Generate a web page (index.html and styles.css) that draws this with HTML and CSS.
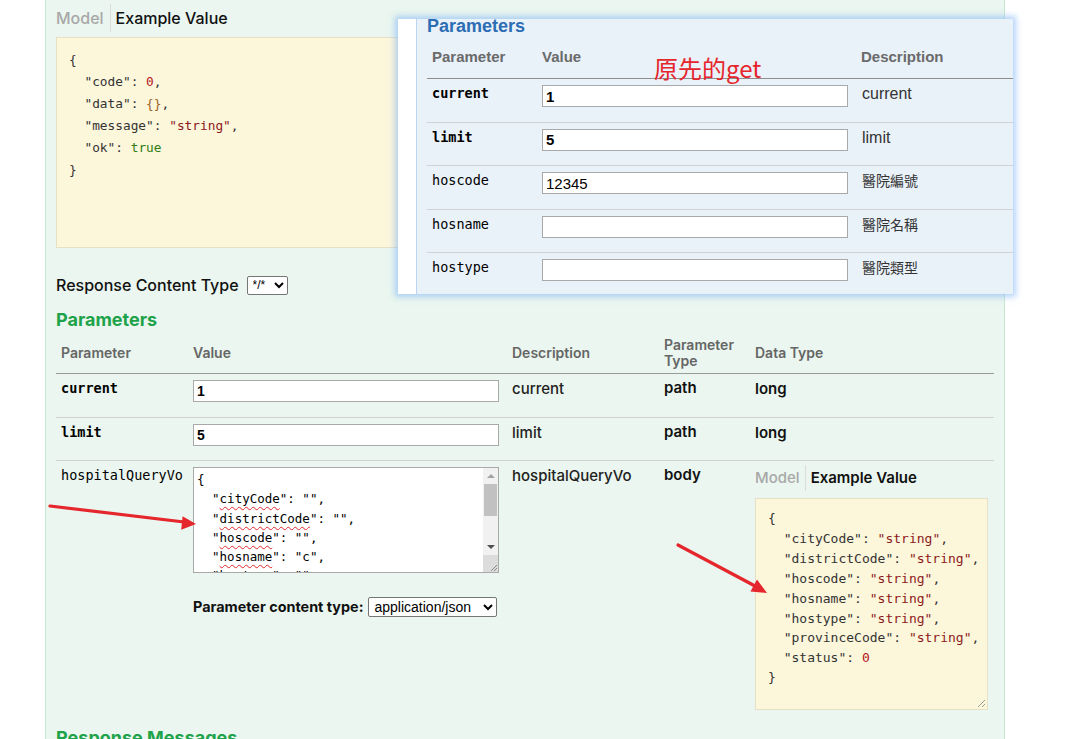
FILE: index.html
```html
<!DOCTYPE html>
<html lang="zh-Hant">
<head>
<meta charset="utf-8">
<title>Swagger UI</title>
<link rel="stylesheet" href="styles.css">
</head>
<body>
<div class="operation">
  <div class="tabs">
    <span class="tab tab-off">Model</span><span class="tab-sep"></span><span class="tab tab-on">Example Value</span>
  </div>
  <pre class="snippet snippet-top">{
  <span class="k">"code"</span>: <span class="n">0</span>,
  <span class="k">"data"</span>: <span class="o">{}</span>,
  <span class="k">"message"</span>: <span class="s">"string"</span>,
  <span class="k">"ok"</span>: <span class="b">true</span>
}</pre>

  <div class="rct">
    <span class="rct-label">Response Content Type</span>
    <select class="sel sel-rct"><option>*/*</option></select>
  </div>

  <h4 class="sec-title">Parameters</h4>

  <div class="ptable">
    <div class="prow phead">
      <div class="cell">Parameter</div>
      <div class="cell">Value</div>
      <div class="cell">Description</div>
      <div class="cell">Parameter<br>Type</div>
      <div class="cell">Data Type</div>
    </div>

    <div class="prow pbody">
      <div class="cell mono req">current</div>
      <div class="cell cell-input"><input class="inp req-inp" type="text" value="1"></div>
      <div class="cell desc">current</div>
      <div class="cell ptype">path</div>
      <div class="cell dtype">long</div>
    </div>

    <div class="prow pbody">
      <div class="cell mono req">limit</div>
      <div class="cell cell-input"><input class="inp req-inp" type="text" value="5"></div>
      <div class="cell desc">limit</div>
      <div class="cell ptype">path</div>
      <div class="cell dtype">long</div>
    </div>

    <div class="prow pbody plast">
      <div class="cell mono">hospitalQueryVo</div>
      <div class="cell cell-input">
        <div class="json-input">
          <div class="json-text">{
  "<span class="typo">cityCode</span>": "",
  "<span class="typo">districtCode</span>": "",
  "<span class="typo">hoscode</span>": "",
  "<span class="typo">hosname</span>": "c",
  "hostype": "",
  "provinceCode": "",
  "status": 0
}</div>
          <div class="json-scroll">
            <div class="sb-up"><span class="tri-up"></span></div>
            <div class="sb-thumb"></div>
            <div class="sb-track"></div>
            <div class="sb-down"><span class="tri-down"></span></div>
            <div class="sb-corner">
              <svg class="grip" width="10" height="10" viewBox="0 0 10 10"><path d="M9 3 L3 9 M9 6 L6 9" stroke="#8a8a8a" stroke-width="1"/></svg>
            </div>
          </div>
        </div>
        <div class="pct">
          <span class="pct-label">Parameter content type:</span>
          <select class="sel sel-pct"><option>application/json</option></select>
        </div>
      </div>
      <div class="cell desc">hospitalQueryVo</div>
      <div class="cell ptype">body</div>
      <div class="cell dtype-model">
        <div class="tabs tabs-small">
          <span class="tab tab-off">Model</span><span class="tab-sep"></span><span class="tab tab-on">Example Value</span>
        </div>
        <pre class="snippet snippet-body">{
  <span class="k">"cityCode"</span>: <span class="s">"string"</span>,
  <span class="k">"districtCode"</span>: <span class="s">"string"</span>,
  <span class="k">"hoscode"</span>: <span class="s">"string"</span>,
  <span class="k">"hosname"</span>: <span class="s">"string"</span>,
  <span class="k">"hostype"</span>: <span class="s">"string"</span>,
  <span class="k">"provinceCode"</span>: <span class="s">"string"</span>,
  <span class="k">"status"</span>: <span class="n">0</span>
}<svg class="grip grip-pre" width="10" height="10" viewBox="0 0 10 10"><path d="M9 2 L2 9 M9 6 L6 9" stroke="#9a9a9a" stroke-width="1"/></svg></pre>
      </div>
    </div>
  </div>

  <h4 class="sec-title sec-resp">Response Messages</h4>
</div>

<div class="overlay">
  <div class="ov-strip"></div>
  <div class="ov-body">
    <h4 class="ov-title">Parameters</h4>
    <div class="ov-row ov-head">
      <div class="ov-cell">Parameter</div>
      <div class="ov-cell">Value</div>
      <div class="ov-cell">Description</div>
    </div>
    <div class="ov-row">
      <div class="ov-cell mono ov-mono req">current</div>
      <div class="ov-cell ov-incell"><input class="ov-inp req-inp" type="text" value="1"></div>
      <div class="ov-cell ov-desc">current</div>
    </div>
    <div class="ov-row">
      <div class="ov-cell mono ov-mono req">limit</div>
      <div class="ov-cell ov-incell"><input class="ov-inp req-inp" type="text" value="5"></div>
      <div class="ov-cell ov-desc">limit</div>
    </div>
    <div class="ov-row">
      <div class="ov-cell mono ov-mono">hoscode</div>
      <div class="ov-cell ov-incell"><input class="ov-inp" type="text" value="12345"></div>
      <div class="ov-cell ov-desc cjk">醫院編號</div>
    </div>
    <div class="ov-row">
      <div class="ov-cell mono ov-mono">hosname</div>
      <div class="ov-cell ov-incell"><input class="ov-inp" type="text" value=""></div>
      <div class="ov-cell ov-desc cjk">醫院名稱</div>
    </div>
    <div class="ov-row ov-rowlast">
      <div class="ov-cell mono ov-mono">hostype</div>
      <div class="ov-cell ov-incell"><input class="ov-inp" type="text" value=""></div>
      <div class="ov-cell ov-desc cjk">醫院類型</div>
    </div>
  </div>
</div>

<div class="note">原先的get</div>

<svg class="arrows" width="1070" height="739" viewBox="0 0 1070 739">
  <line x1="50" y1="506" x2="184" y2="522" stroke="#e5262c" stroke-width="3.2" stroke-linecap="round"/>
  <polygon points="196,524 182.6,516.3 181.2,529.8" fill="#e5262c"/>
  <line x1="678" y1="545" x2="755" y2="586" stroke="#e5262c" stroke-width="3.2" stroke-linecap="round"/>
  <polygon points="767,593 757,579.5 750.5,591.5" fill="#e5262c"/>
</svg>
</body>
</html>
```

FILE: styles.css
```css
* { box-sizing: border-box; }

html, body { margin: 0; padding: 0; }

body {
  width: 1070px;
  height: 739px;
  overflow: hidden;
  position: relative;
  background: #ffffff;
  font-family: Inter, "Noto Sans", sans-serif;
  color: #111;
}

.operation {
  margin-left: 45px;
  width: 960px;
  min-height: 739px;
  background: #eaf6ef;
  border-left: 1px solid #c6e8d3;
  border-right: 1px solid #c6e8d3;
  padding: 4px 10px 0 10px;
}

/* Model / Example Value tabs */
.tabs {
  display: flex;
  align-items: center;
  height: 28px;
}
.tab {
  font-size: 16px;
  font-weight: 500;
  line-height: 20px;
}
.tab-off { color: #a8a8a8; }
.tab-on { color: #111; }
.tab-sep {
  width: 1px;
  align-self: stretch;
  background: #dcdcdc;
  margin: 0 5px 0 6px;
}

.snippet {
  margin: 0;
  background: #fcf6db;
  border: 1px solid #e5e0c6;
  font-family: "DejaVu Sans Mono", "Liberation Mono", monospace;
  color: #333;
  white-space: pre;
  overflow: hidden;
}
.snippet .k { color: #333; }
.snippet .s { color: #8c1a1a; }
.snippet .n { color: #b3151b; }
.snippet .b { color: #2f7d12; }
.snippet .o { color: #9c6226; }

.snippet-top {
  margin-top: 5px;
  width: 440px;
  height: 211px;
  padding: 11px 12px;
  font-size: 12.8px;
  line-height: 22px;
}

/* response content type */
.rct {
  margin-top: 27px;
  display: flex;
  align-items: center;
  height: 20px;
  gap: 8px;
}
.rct-label {
  font-size: 16px;
  font-weight: 500;
  line-height: 20px;
}
.sel {
  font-family: "Liberation Sans", Arial, sans-serif;
  color: #000;
  background: #fff;
  border: 1px solid #767676;
  border-radius: 2px;
  padding: 0 1px;
  margin: 0;
}
.sel-rct {
  width: 41px;
  height: 19px;
  font-size: 12px;
}

.sec-title {
  margin: 14px 0 2px 0;
  font-size: 18px;
  font-weight: 700;
  line-height: 22px;
  color: #1ea34a;
}
.sec-resp { margin-top: 17px; }

/* parameter table */
.prow {
  display: grid;
  grid-template-columns: 132px 319px 152px 91px 1fr;
  border-bottom: 1px solid #cfd4d1;
}
.phead {
  border-bottom: 1px solid #9a9a9a;
  padding: 4px 0;
  align-items: center;
  color: #666;
  font-size: 14px;
  font-weight: 600;
  line-height: 16px;
}
.cell { padding: 0 5px; }

.pbody {
  align-items: start;
  min-height: 43.5px;
}
.plast { border-bottom: none; }

.mono {
  font-family: "DejaVu Sans Mono", "Liberation Mono", monospace;
  font-size: 13.5px;
  line-height: 18px;
  color: #000;
  padding-top: 5px;
}
.req { font-weight: 700; }

.cell-input { padding-top: 6px; }

.inp {
  display: block;
  width: 306px;
  height: 22px;
  border: 1px solid #a9a9a9;
  background: #fff;
  padding: 0 3px;
  margin: 0;
  font-family: "Liberation Sans", Arial, sans-serif;
  font-size: 14px;
  color: #000;
}
.req-inp { font-weight: 700; }

.desc {
  padding-top: 6px;
  font-size: 15px;
  font-weight: 500;
  line-height: 18px;
  color: #222;
}
.ptype {
  padding-top: 5px;
  font-size: 15px;
  font-weight: 600;
  line-height: 18px;
  color: #111;
}
.dtype {
  padding-top: 6px;
  font-size: 15px;
  font-weight: 600;
  line-height: 18px;
  color: #111;
}

/* fake textarea */
.json-input {
  display: flex;
  width: 306px;
  height: 106px;
  border: 1px solid #a9a9a9;
  background: #fff;
}
.json-text {
  flex: 1;
  overflow: hidden;
  padding: 2px 3px;
  font-family: "DejaVu Sans Mono", "Liberation Mono", monospace;
  font-size: 12.5px;
  line-height: 19.3px;
  white-space: pre;
  color: #000;
}
.typo {
  text-decoration: underline wavy #e0282e;
  text-decoration-thickness: 1px;
  text-underline-offset: 3px;
}
.json-scroll {
  width: 15px;
  display: flex;
  flex-direction: column;
  background: #f1f1f1;
}
.sb-up, .sb-down {
  display: flex;
  align-items: center;
  justify-content: center;
}
.sb-up { height: 16px; }
.sb-down { height: 17px; }
.tri-up {
  width: 0; height: 0;
  border-left: 4px solid transparent;
  border-right: 4px solid transparent;
  border-bottom: 4px solid #a3a3a3;
}
.tri-down {
  width: 0; height: 0;
  border-left: 4px solid transparent;
  border-right: 4px solid transparent;
  border-top: 4px solid #505050;
}
.sb-thumb {
  height: 32px;
  margin: 0 1px;
  background: #c1c1c1;
}
.sb-track { flex: 1; }
.sb-corner {
  height: 17px;
  background: #dcdcdc;
  display: flex;
  align-items: flex-end;
  justify-content: flex-end;
}
.grip { display: block; }

.pct {
  margin-top: 24px;
  display: flex;
  align-items: center;
  gap: 5px;
  height: 20px;
}
.pct-label {
  font-size: 14.4px;
  font-weight: 700;
  line-height: 18px;
}
.sel-pct {
  width: 129px;
  height: 20px;
  font-size: 14px;
}

.dtype-model { padding-top: 6px; }
.tabs-small {
  height: 22px;
  margin-bottom: 9px;
}
.tabs-small .tab { font-size: 15px; line-height: 18px; }
.tabs-small .tab-on { font-weight: 600; }
.tabs-small .tab-sep { margin: 0 5px 0 5px; height: 26px; align-self: center; }

.snippet-body {
  position: relative;
  width: 233px;
  height: 212px;
  padding: 10px 12px;
  font-size: 13px;
  line-height: 19.9px;
}
.grip-pre {
  position: absolute;
  right: 1px;
  bottom: 1px;
}

/* pasted screenshot of the former GET endpoint */
.overlay {
  position: absolute;
  left: 398px;
  top: 19px;
  width: 615px;
  height: 275px;
  display: flex;
  background: #fff;
  box-shadow: 0 0 6px 3px rgba(120, 176, 246, 0.55);
}
.ov-strip { width: 18px; background: #fff; }
.ov-body {
  flex: 1;
  background: #e9f1f9;
  border-left: 1px solid #bcd5ee;
  padding-left: 10px;
  overflow: hidden;
}
.ov-title {
  margin: 0;
  font-family: "Liberation Sans", Arial, sans-serif;
  font-size: 18px;
  font-weight: 700;
  line-height: 14px;
  color: #2c6db4;
}
.ov-row {
  display: grid;
  grid-template-columns: 115px 319px 1fr;
  align-items: start;
  height: 43.5px;
  border-bottom: 1px solid #cfd3d7;
}
.ov-rowlast { border-bottom: none; }
.ov-head {
  height: 46px;
  padding-top: 15px;
  border-bottom: 1px solid #8e8e8e;
  font-family: "Liberation Sans", Arial, sans-serif;
  font-size: 15px;
  font-weight: 700;
  line-height: 18px;
  color: #6a6a6a;
}
.ov-cell { padding: 0 5px; }
.ov-head .ov-cell:nth-child(2) { padding-left: 0; }
.ov-head .ov-cell:nth-child(3) { padding-left: 0; }
.ov-incell { padding: 6px 0 0 0; }
.ov-mono { padding-top: 5px; }
.ov-inp {
  display: block;
  width: 306px;
  height: 22px;
  border: 1px solid #a9a9a9;
  background: #fff;
  padding: 0 3px;
  margin: 0;
  font-family: "Liberation Sans", Arial, sans-serif;
  font-size: 15px;
  color: #000;
}
.ov-desc {
  padding-top: 5px;
  padding-left: 1px;
  font-family: "Liberation Sans", Arial, sans-serif;
  font-size: 16px;
  line-height: 19px;
  color: #333;
}
.cjk {
  font-family: "Noto Sans CJK TC", "Noto Sans CJK SC", sans-serif;
  font-size: 14px;
}

.note {
  position: absolute;
  left: 654px;
  top: 53px;
  font-family: "Noto Sans CJK SC", "Noto Sans CJK TC", sans-serif;
  font-size: 24px;
  font-weight: 400;
  line-height: 30px;
  color: #e5262c;
}

.arrows {
  position: absolute;
  left: 0;
  top: 0;
  pointer-events: none;
}
```
